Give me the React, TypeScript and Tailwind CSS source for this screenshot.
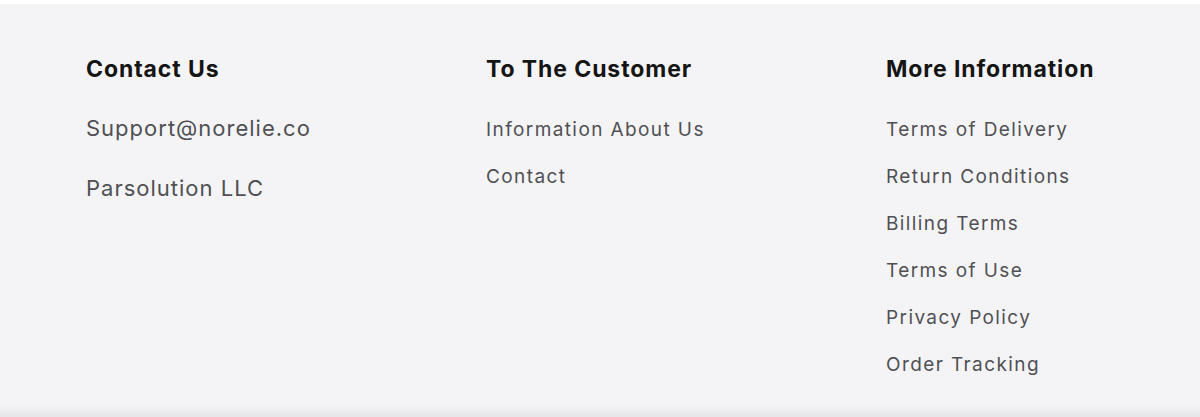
const customerLinks = ["Information About Us", "Contact"];

const infoLinks = [
    "Terms of Delivery",
    "Return Conditions",
    "Billing Terms",
    "Terms of Use",
    "Privacy Policy",
    "Order Tracking",
];

function Heading({ children }: { children: React.ReactNode }) {
    return (
        <h3 className="text-[23px] leading-[28px] font-bold tracking-[0.9px] text-[#151515]">
            {children}
        </h3>
    );
}

function FooterLink({ label }: { label: string }) {
    return (
        <li>
            <a className="text-[19px] leading-[26px] tracking-[1.4px] text-[#505054]" href="#">
                {label}
            </a>
        </li>
    );
}

export default function App() {
    return (
        <div className="w-full bg-white pt-[4px] font-['Inter',sans-serif]">
            <footer className="relative h-[413px] bg-[#f4f4f6]">
                <div className="grid grid-cols-3 pt-[51px]">
                    {/* Contact */}
                    <div className="pl-[86px]">
                        <Heading>Contact Us</Heading>
                        <ul className="mt-[31px] flex flex-col gap-[32px]">
                            <li className="text-[22px] leading-[28px] tracking-[1px] text-[#505054]">
                                Support@norelie.co
                            </li>
                            <li className="text-[22px] leading-[28px] tracking-[1px] text-[#505054]">
                                Parsolution LLC
                            </li>
                        </ul>
                    </div>

                    {/* Customer */}
                    <div className="pl-[86px]">
                        <Heading>To The Customer</Heading>
                        <ul className="mt-[34px] flex flex-col gap-[21px]">
                            {customerLinks.map((l) => (
                                <FooterLink key={l} label={l} />
                            ))}
                        </ul>
                    </div>

                    {/* More info */}
                    <div className="pl-[86px]">
                        <Heading>More Information</Heading>
                        <ul className="mt-[34px] flex flex-col gap-[21px]">
                            {infoLinks.map((l) => (
                                <FooterLink key={l} label={l} />
                            ))}
                        </ul>
                    </div>
                </div>
                <div className="absolute inset-x-0 bottom-0 h-[12px] bg-gradient-to-b from-[#f4f4f6] to-[#e6e6e8]" />
            </footer>
        </div>
    );
}
